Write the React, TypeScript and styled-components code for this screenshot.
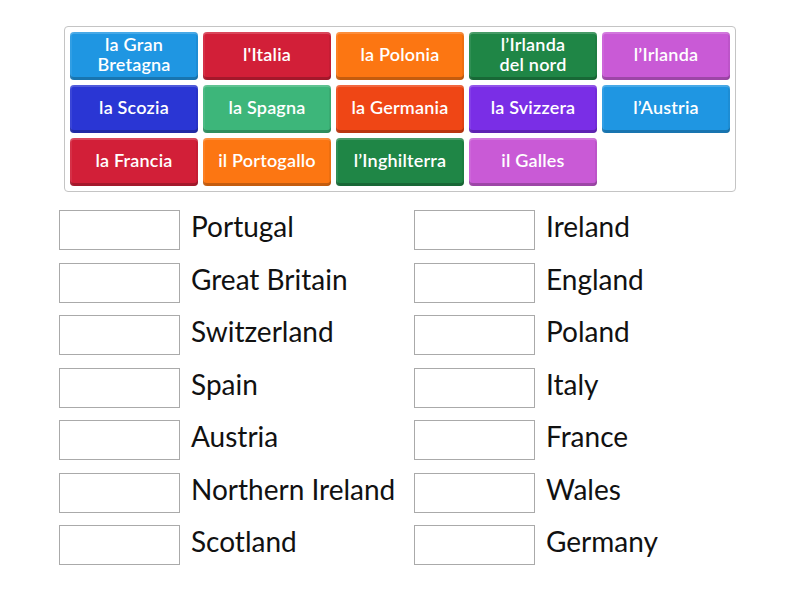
import React from "react";
import styled, { createGlobalStyle } from "styled-components";

const GlobalStyle = createGlobalStyle`
  html, body { margin: 0; padding: 0; background: #ffffff; }
  body { font-family: "Lato", "Open Sans", sans-serif; }
`;

const Page = styled.div`
  width: 800px;
  height: 600px;
  display: flex;
  flex-direction: column;
  align-items: flex-start;
  box-sizing: border-box;
  padding-top: 26px;
`;

const Bank = styled.div`
  margin-left: 64px;
  width: 672px;
  box-sizing: border-box;
  border: 1px solid #c4c4c4;
  border-radius: 4px;
  padding: 5px;
  display: grid;
  grid-template-columns: repeat(5, 1fr);
  grid-auto-rows: 48px;
  gap: 5px;
`;

const Tile = styled.div<{ $bg: string }>`
  background: ${(p) => p.$bg};
  border-radius: 4px;
  color: #ffffff;
  font-family: "Lato", sans-serif;
  font-weight: 600;
  font-size: 18px;
  line-height: 20px;
  letter-spacing: 0.2px;
  text-align: center;
  display: flex;
  align-items: center;
  justify-content: center;
  box-shadow: inset 0 -3px 0 rgba(0, 0, 0, 0.22), inset 0 2px 0 rgba(255, 255, 255, 0.18),
    inset 2px 0 0 rgba(255, 255, 255, 0.08), inset -2px 0 0 rgba(0, 0, 0, 0.06);
  padding-bottom: 5px;
  box-sizing: border-box;
`;

const Answers = styled.div`
  margin-top: 18px;
  margin-left: 59px;
  display: grid;
  grid-template-columns: 355px 330px;
  grid-auto-rows: 40px;
  row-gap: 12.5px;
`;

const Row = styled.div`
  display: flex;
  align-items: center;
  gap: 11px;
`;

const Slot = styled.div`
  width: 121px;
  height: 40px;
  box-sizing: border-box;
  border: 1px solid #aaaaaa;
  background: #ffffff;
  flex: none;
`;

const Label = styled.span`
  font-family: "Lato", sans-serif;
  font-size: 28px;
  color: #111111;
  white-space: nowrap;
  margin-top: -8px;
`;

const C = {
  lblue: "#1f96e2",
  red: "#d21f38",
  orange: "#fc7612",
  dgreen: "#1f8646",
  pink: "#c95ad6",
  dblue: "#2a36d4",
  lgreen: "#3db67a",
  redorange: "#ef4615",
  purple: "#7a2ee6",
};

const tiles: [string, string][] = [
  ["la Gran\nBretagna", C.lblue],
  ["l'Italia", C.red],
  ["la Polonia", C.orange],
  ["l’Irlanda\ndel nord", C.dgreen],
  ["l’Irlanda", C.pink],
  ["la Scozia", C.dblue],
  ["la Spagna", C.lgreen],
  ["la Germania", C.redorange],
  ["la Svizzera", C.purple],
  ["l’Austria", C.lblue],
  ["la Francia", C.red],
  ["il Portogallo", C.orange],
  ["l’Inghilterra", C.dgreen],
  ["il Galles", C.pink],
];

const left = ["Portugal", "Great Britain", "Switzerland", "Spain", "Austria", "Northern Ireland", "Scotland"];
const right = ["Ireland", "England", "Poland", "Italy", "France", "Wales", "Germany"];

export default function App() {
  const rows: React.ReactNode[] = [];
  for (let i = 0; i < left.length; i++) {
    rows.push(
      <Row key={"l" + i}>
        <Slot />
        <Label>{left[i]}</Label>
      </Row>
    );
    rows.push(
      <Row key={"r" + i}>
        <Slot />
        <Label>{right[i]}</Label>
      </Row>
    );
  }
  return (
    <>
      <GlobalStyle />
      <Page>
        <Bank>
          {tiles.map(([t, c], i) => (
            <Tile key={i} $bg={c}>
              <span>
                {t.split("\n").map((line, j) => (
                  <React.Fragment key={j}>
                    {j > 0 && <br />}
                    {line}
                  </React.Fragment>
                ))}
              </span>
            </Tile>
          ))}
        </Bank>
        <Answers>{rows}</Answers>
      </Page>
    </>
  );
}
